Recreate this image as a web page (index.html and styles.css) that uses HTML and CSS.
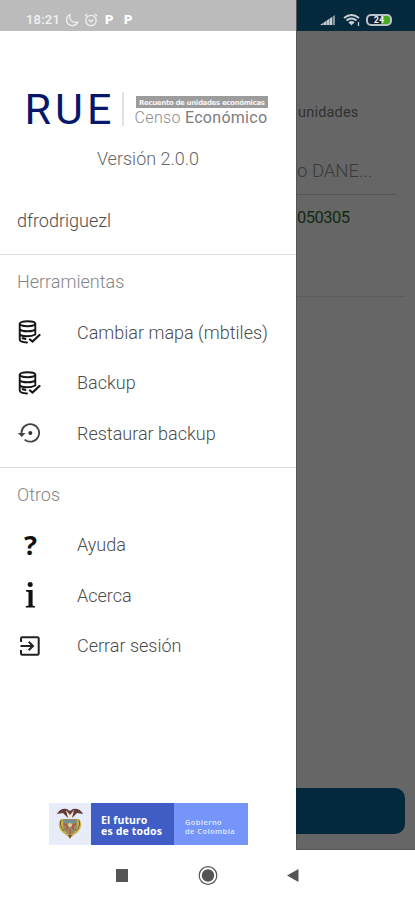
FILE: index.html
```
<!DOCTYPE html>
<html lang="es">
<head>
<meta charset="utf-8">
<title>RUE</title>
<link rel="stylesheet" href="styles.css">
</head>
<body>
<svg class="defs" width="0" height="0"><defs>
<symbol id="db" viewBox="0 0 24 24"><g fill="none" stroke="#161616" stroke-width="1.9" stroke-linecap="round"><ellipse cx="10.500" cy="3.700" rx="7.800" ry="2.500"/><path d="M2.700 4V19.300C2.700 21 5 22.300 10 22.500M18.300 4V14.500M2.700 9C4 12 17 12 18.300 9M2.700 14C4 17 14 17 18.300 14.500M5.500 18.300L8.500 19"/><path d="M13 19.500L15.500 21.500L22.500 15" stroke-width="2.200"/></g></symbol>
</defs></svg>
<div class="screen">
  <div class="main">
    <aside class="drawer">
      <div class="status left">
        <span class="time">18:21</span>
        <svg width="14" height="14" viewBox="0 0 14 14" fill="none" stroke="#eee" stroke-width="1.300"><path d="M5 1.500C1 3 .5 8 3 10.700C6 14 11.500 12.800 12.700 9C8 10.500 3.500 7 5 1.500Z"/></svg>
        <svg class="alarm" width="14" height="14" viewBox="0 0 14 14" fill="none" stroke="#eee" stroke-width="1.300"><circle cx="7" cy="7.500" r="5.200"/><path d="M1 3L3.500 1M13 3L10.500 1M4.500 6.500L7 8.800L9.500 6.500"/></svg>
        <span class="p">P</span><span class="p">P</span>
      </div>
      <header class="brand">
        <svg width="296" height="50" viewBox="0 84 296 50">
          <text class="rue" x="24.500" y="124" textLength="87">RUE</text>
          <path d="M123 92V126" stroke="#d2d2d2" stroke-width="1.300"/>
          <rect x="136" y="96" width="132" height="12" fill="#9c9c9c"/>
          <text class="tag" x="139" y="105" textLength="126">Recuento de unidades económicas</text>
          <text class="censo" x="134.500" y="123" textLength="46">Censo</text>
          <text class="econ" x="185" y="123" textLength="82">Económico</text>
        </svg>
        <div class="version">Versión 2.0.0</div>
      </header>
      <div class="user">dfrodriguezl</div>
      <section class="group">
        <h2>Herramientas</h2>
        <div class="item"><svg width="24" height="24"><use href="#db"/></svg><span>Cambiar mapa (mbtiles)</span></div>
        <div class="item"><svg width="24" height="24"><use href="#db"/></svg><span>Backup</span></div>
        <div class="item"><svg width="24" height="24" viewBox="0 0 24 24"><path d="M4.500 12A8.800 8.800 0 1 1 7.600 18.600" fill="none" stroke="#444" stroke-width="1.800"/><path d="M.8 12H8.600L4.700 16Z" fill="#444"/><circle cx="13.300" cy="12" r="2" fill="#333"/></svg><span>Restaurar backup</span></div>
      </section>
      <section class="group">
        <h2>Otros</h2>
        <div class="item"><b class="q">?</b><span>Ayuda</span></div>
        <div class="item"><svg width="24" height="28" viewBox="0 0 24 28" fill="#111"><circle cx="13.200" cy="3.500" r="2.500"/><path d="M9 9H15.600V24.500L18 25.200V26.500H8.700V25.200L11.500 24.500V11L9 10.500Z"/></svg><span>Acerca</span></div>
        <div class="item"><svg width="24" height="24" viewBox="0 0 24 24" fill="none" stroke="#222" stroke-width="2"><path d="M4 8V4.500Q4 3.300 5.200 3.300H20.500Q21.700 3.300 21.700 4.500V19.500Q21.700 20.700 20.500 20.700H5.200Q4 20.700 4 19.500V16M3.500 12H15.500M11.700 7.800L16 12L11.700 16.200"/></svg><span>Cerrar sesión</span></div>
      </section>
      <footer class="gov">
        <div class="crest"><svg width="28" height="34" viewBox="0 0 28 34"><path d="M5 12Q0 18 6 25L14 31L22 25Q28 18 23 12Z" fill="#c7b14b"/><path d="M7 12H21V20Q20 26 14 28Q8 26 7 20Z" fill="#968b65"/><path d="M8 13H20V16H8Z" fill="#72928f"/><path d="M8 17L12 19L10 23M20 17L16 19L18 23M14 22V27" fill="none" stroke="#b35448" stroke-width="1.500"/><circle cx="14" cy="18" r="2" fill="#dfcf9c"/><path d="M1 7Q4 1 11 2L14 4L17 2Q24 1 27 7L21 6L16 11H12L7 6Z" fill="#633b37"/><path d="M10 3L14 8L18 3L16 11H12Z" fill="#eee5dc"/><path d="M5 13Q3 19 8 24M23 13Q25 19 20 24" fill="none" stroke="#74622d"/><path d="M12 28L14 32L16 28Z" fill="#804b35"/></svg></div>
        <div class="futuro">El futuro<br>es de todos</div>
        <div class="gobierno">Gobierno<br>de Colombia</div>
      </footer>
    </aside>
    <div class="behind">
      <div class="status right">
        <svg width="16" height="12" viewBox="0 0 16 12" fill="#c9cdce"><path d="M0 11L3 9V11ZM3.400 8.800L6 7V11H3.400ZM6.400 6.800L9 5V11H6.400ZM9.400 4.800L12 3V11H9.400Z"/><path d="M12.400 2.700L15 1V11H12.400Z" fill="#83949b"/></svg>
        <svg class="wifi" width="18" height="14" viewBox="0 0 18 14" fill="none" stroke="#c9d0d3" stroke-width="1.900"><path d="M1 5Q8.500-1 16 5M3.500 7.500Q8.500 3.500 13.500 7.500M6 10Q8.500 8 11 10"/><path d="M6.500 10L8.500 12.500L10.500 10Z" fill="#c9d0d3" stroke="none"/><path d="M15.500 9V13" stroke-width="1.300"/></svg>
        <div class="battery"><span>24</span></div>
      </div>
      <div class="title">unidades</div>
      <div class="field">o DANE...</div>
      <div class="code">050305</div>
      <div class="rule"></div>
      <div class="button"></div>
    </div>
  </div>
  <nav class="nav">
    <svg width="415" height="50" viewBox="0 850 415 50" fill="#555"><rect x="116" y="869" width="12" height="13"/><circle cx="208" cy="875.500" r="8.800" fill="none" stroke="#555" stroke-width="1.200"/><circle cx="208" cy="875.500" r="6.200"/><path d="M287 875.500L298.500 869V882Z"/></svg>
  </nav>
</div>
</body>
</html>
```
FILE: styles.css
```
* { box-sizing: border-box; }
body { margin: 0; background: #fff; font-family: Roboto, sans-serif; }
.defs { display: block; }
.screen { width: 415px; height: 900px; overflow: hidden; display: flex; flex-direction: column; }
.main { display: flex; height: 850px; }
.drawer { width: 296px; background: #fff; display: flex; flex-direction: column; }
.status { height: 31px; flex: none; display: flex; align-items: center; padding-top: 8px; }
.left { background: #bbb; padding-left: 26px; color: #f1f1f1; }
.time { font-size: 13px; font-weight: 500; width: 39px; letter-spacing: .2px; }
.alarm { margin-left: 5px; margin-right: 7px; }
.p { font-size: 13px; line-height: 14px; font-weight: 900; width: 19px; color: #fff; }
.brand { height: 163px; padding-top: 53px; }
.brand svg { display: block; }
.rue { font-size: 43px; fill: #07176a; }
.tag { font: 700 7px "DejaVu Sans", sans-serif; fill: #f5f5f5; }
.censo { font-size: 16px; font-weight: 300; fill: #8c8c8c; }
.econ { font-size: 16px; fill: #7c7c7c; }
.version { text-align: center; font-size: 18px; font-weight: 300; line-height: 24px; margin-top: 13px; color: #666; }
.user { height: 60px; padding: 15px 17px; line-height: 24px; font-size: 18px; font-weight: 300; color: #4c4c4c; }
.group { border-top: 1px solid #ddd; height: 212.500px; padding-left: 17px; }
h2 { margin: 15px 0 13px; font-size: 18px; line-height: 24px; font-weight: 300; color: #858585; }
.item { height: 50.600px; display: grid; grid-template-columns: 60px 1fr; align-items: center; font-size: 18px; font-weight: 300; color: #4c4c4c; white-space: nowrap; }
.q { font: 700 27px "Noto Sans", sans-serif; line-height: 30px; color: #111; padding-left: 7px; }
.gov { width: 199px; height: 42px; margin: auto 0 5px 49px; display: grid; grid-template-columns: 42px 83px 1fr; color: #fff; }
.crest { background: #e8ecf9; display: grid; place-items: center; }
.futuro { background: #3f5dc5; padding: 12px 0 0 10px; font: 700 10.500px/11px "Noto Sans", sans-serif; letter-spacing: .15px; white-space: nowrap; }
.gobierno { background: #7595fb; padding: 15px 0 0 11px; font: 600 7.500px/9px "Noto Sans", sans-serif; letter-spacing: .4px; color: #dce5ff; white-space: nowrap; }
.behind { width: 119px; background: #666; border-left: 1px solid #555; border-bottom: 1px solid #555; display: flex; flex-direction: column; }
.right { background: #04293c; padding-left: 23px; }
.wifi { margin-left: 7px; }
.battery { width: 26px; height: 12px; margin-left: 5px; border: 2px solid #b9c2c6; border-radius: 5px; background: linear-gradient(90deg, #123 60%, #48a923 60%); display: grid; place-items: center; font-size: 9px; line-height: 8px; font-weight: 700; color: #eee; }
.title, .field, .code { white-space: nowrap; flex: none; }
.title { margin-top: 72px; padding-left: 1px; font-size: 14.500px; line-height: 20px; color: #303030; letter-spacing: .2px; }
.field { width: 99px; height: 42px; margin-top: 30px; padding-top: 6px; font-size: 18.500px; line-height: 24px; font-weight: 300; color: #3b3b3b; border-bottom: 1px solid #555; }
.code { margin-top: 11px; font-size: 16.500px; line-height: 24px; letter-spacing: -.5px; color: #102a10; }
.rule { height: 1px; flex: none; margin: 66px 10px 0 0; background: #5c5c5c; }
.button { width: 109px; height: 46px; flex: none; margin: auto 0 15px -1px; background: #04293c; border-radius: 0 10px 10px 0; }
.nav { height: 50px; }
.nav svg { display: block; }
```
